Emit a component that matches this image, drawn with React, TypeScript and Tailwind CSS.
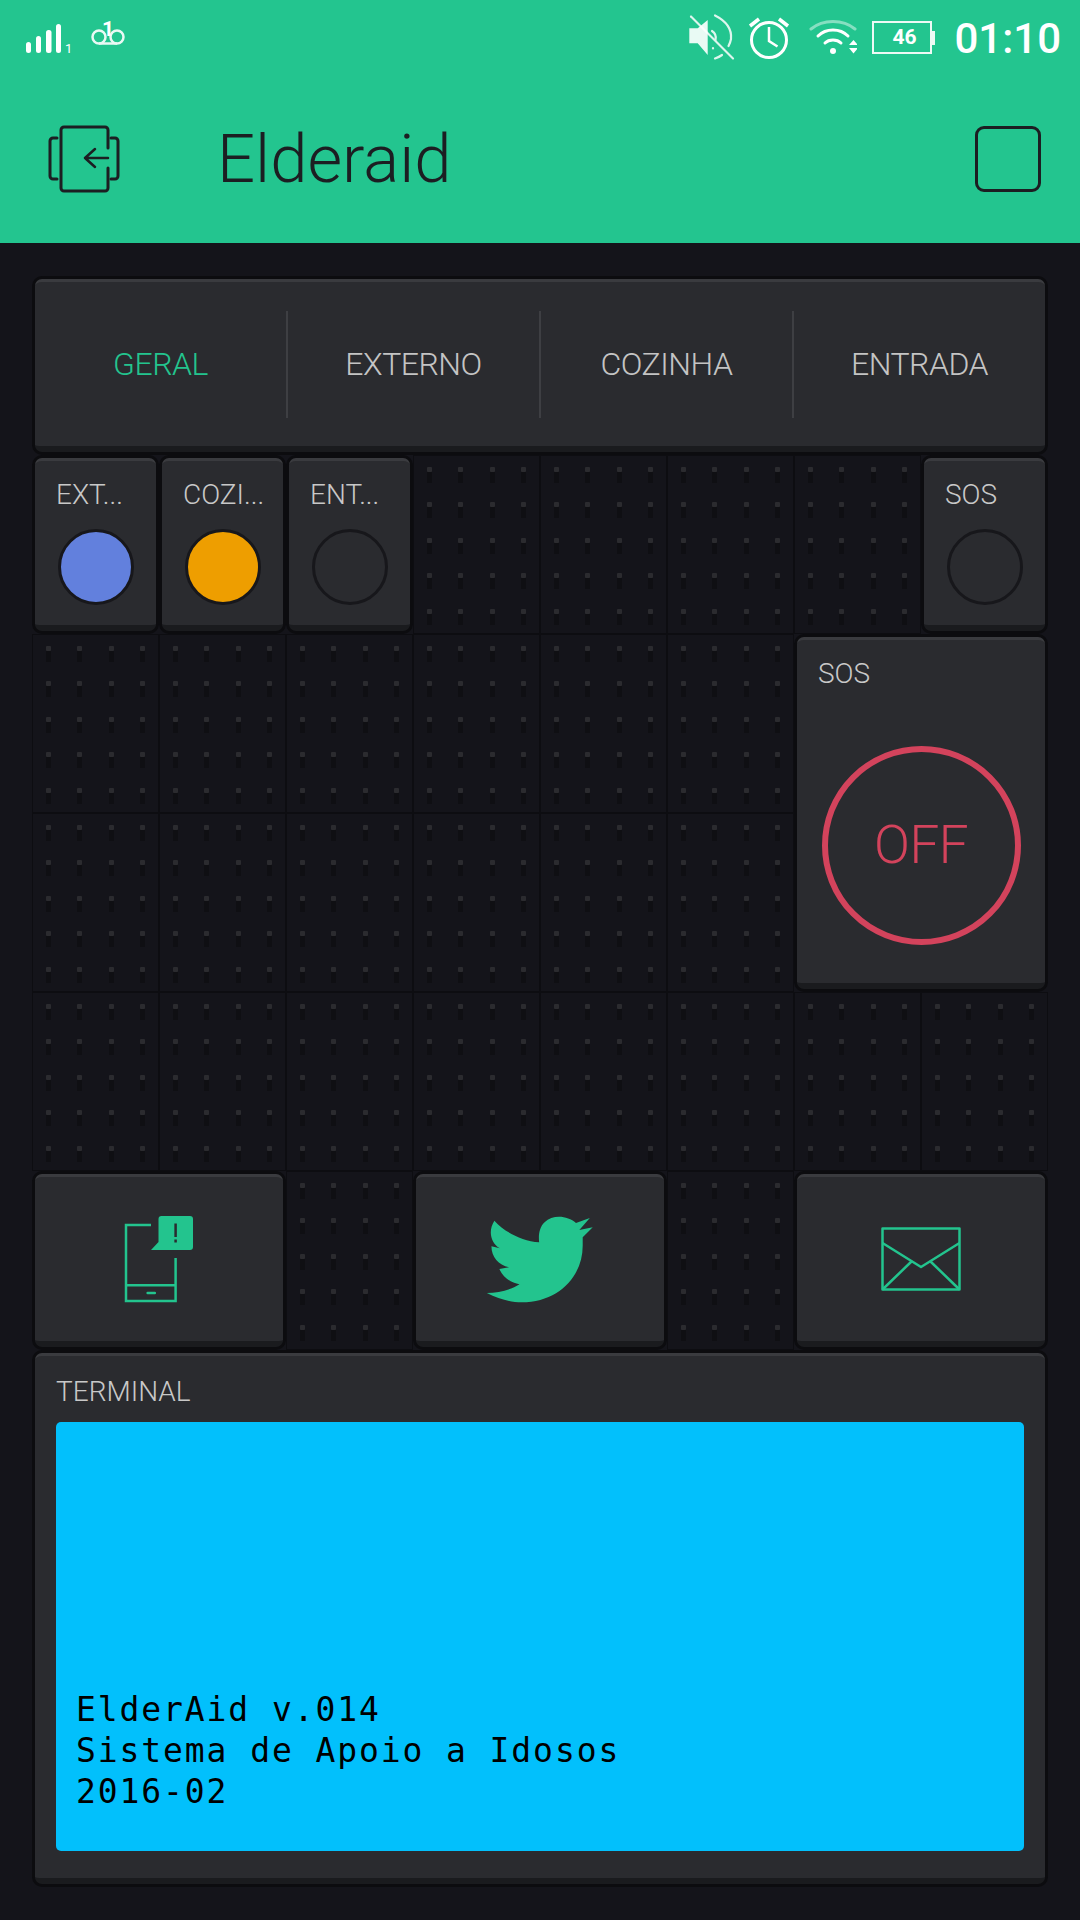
const ui = "[font-family:Roboto,'Liberation_Sans',sans-serif]"

function Dots() {
    const dots = Array.from({ length: 20 })
    return (
        <div className="grid grid-cols-4 grid-rows-5 border border-[#0d0d11] h-full">
            {dots.map((_, i) => (
                <div key={i} className="flex flex-col items-center pt-[11px]">
                    <div className="w-[5px] h-[5px] rounded-[1px] bg-[#2b2b2f]" />
                    <div className="w-[5px] h-[11px] bg-[#0f0f13]" />
                </div>
            ))}
        </div>
    )
}

function Widget({ className = "", children }: { className?: string; children?: React.ReactNode }) {
    return (
        <div className={`m-[3px] rounded-[7px] bg-[#2a2b2f] border-t-[3px] border-t-[#3a3b3f] border-b-[6px] border-b-[#1a1b1e] shadow-[0_0_0_3px_#0c0c0f] ${className}`}>
            {children}
        </div>
    )
}

function Led({ label, color }: { label: string; color?: string }) {
    return (
        <Widget>
            <div className="pl-[21px] pr-1 pt-[17px] text-[28px] leading-[33px] font-light text-[#c8c8c8] whitespace-nowrap">{label}</div>
            <div className="flex justify-center mt-[18px]">
                <div
                    className={`w-[76px] h-[76px] rounded-full border-[3px] border-[#17171b] ${color ?? ""}`}
                />
            </div>
        </Widget>
    )
}

function StatusLeft() {
    return (
        <svg width="110" height="44" viewBox="0 0 110 44" className="ml-[24px] mt-[14px]" fill="none">
            <g fill="#fff">
                <rect x="2" y="28" width="5" height="11" rx="2.5" />
                <rect x="12" y="22" width="5" height="17" rx="2.5" />
                <rect x="22" y="16" width="5.5" height="23" rx="2.5" />
                <rect x="32" y="10" width="5" height="29" rx="2.5" />
                <text x="41" y="39" fontSize="13" fontFamily="Roboto">1</text>
            </g>
            <g stroke="#fff" strokeWidth="2.5" opacity="0.9">
                <circle cx="75" cy="23" r="6.5" />
                <circle cx="93" cy="23" r="6.5" />
                <path d="M75 29.5h18" />
            </g>
            <text x="84" y="22" textAnchor="middle" fontSize="21" fontWeight="700" fontFamily="Roboto" fill="#fff">1</text>
        </svg>
    )
}

function MutedIcon() {
    return (
        <svg width="50" height="50" viewBox="0 0 50 50" fill="none" className="mt-[12px]">
            <path d="M3.3 16.3h8.4L21.7 8v35L11.7 31.3H3.3z" fill="#fff" opacity="0.9" />
            <g stroke="#fff" strokeWidth="2.2" opacity="0.85" strokeLinecap="round">
                <path d="M5 4.5L47 46.5" />
                <path d="M29 3.5C40 9 46 17 45 27c-.5 3-1.500 5-2.500 7" />
                <path d="M36 43c-2 1.500-4 2.500-7 3.500" />
                <path d="M26 19c3 2 4.500 5 3.500 9" />
                <path d="M27 36v.5" />
            </g>
        </svg>
    )
}

function AlarmIcon() {
    return (
        <svg width="44" height="46" viewBox="0 0 44 46" fill="none" stroke="#fff" className="mt-[15px] ml-[12px]">
            <circle cx="21" cy="25" r="17.500" strokeWidth="3" />
            <path d="M21 12v14l8.500 5.500" strokeWidth="2.500" />
            <path d="M2 11L11 4M31 4l9 7" strokeWidth="3.500" />
        </svg>
    )
}

function WifiIcon() {
    return (
        <svg width="48" height="38" viewBox="0 0 48 38" fill="none" stroke="#fff" strokeLinecap="round" className="mt-[18px] ml-[17px]">
            <path d="M2 11C14 1 34 1 46 11" strokeWidth="3" opacity="0.45" />
            <path d="M9 18C17 10 31 10 39 18" strokeWidth="3" />
            <path d="M16 25C20 21 28 21 32 25" strokeWidth="3" />
            <circle cx="24" cy="33" r="3" fill="#fff" stroke="none" />
            <path d="M40 27l4.500-5 4.500 5zM40 30h9l-4.500 5.500z" fill="#fff" stroke="none" />
        </svg>
    )
}

function BatteryIcon() {
    return (
        <div className="ml-[15px] mt-[21px] flex items-center h-[33px]">
            <div className="w-[60px] h-[33px] border-[2.5px] border-[#eefaf5] flex items-center justify-center text-[21px] leading-none font-bold text-white pl-1">
                46
            </div>
            <div className="w-[3px] h-[14px] bg-[#eefaf5]" />
        </div>
    )
}

function SwitchIcon() {
    return (
        <svg width="72" height="68" viewBox="0 0 72 68" fill="none" stroke="#1c1e22" strokeWidth="3" strokeLinecap="round" strokeLinejoin="round">
            <path d="M60 23V5a3 3 0 0 0-3-3H16a3 3 0 0 0-3 3v58a3 3 0 0 0 3 3h41a3 3 0 0 0 3-3V43" />
            <path d="M60 33H37M47 24l-10 9 10 9" strokeWidth="2.500" />
            <path d="M9 13H5a3 3 0 0 0-3 3v35a3 3 0 0 0 3 3h4" />
            <path d="M63 13h4a3 3 0 0 1 3 3v35a3 3 0 0 1-3 3h-4" />
        </svg>
    )
}

function PhoneAlert() {
    return (
        <svg width="72" height="88" viewBox="0 0 72 88" fill="none">
            <path d="M28 10H3v76h49.600V43M3 70.300h49.600" stroke="#23c48e" strokeWidth="2.500" />
            <path d="M24.600 78h7.200" stroke="#23c48e" strokeWidth="2.500" strokeLinecap="round" />
            <path d="M38 1h29a3 3 0 0 1 3 3v28a3 3 0 0 1-3 3H28l7.500-8V4a3 3 0 0 1 3-3z" fill="#23c48e" />
            <path d="M52.600 8.500V22M52.600 24.500v3" stroke="#2a2b2f" strokeWidth="2.500" />
        </svg>
    )
}

function Bird() {
    return (
        <svg width="108" height="88" viewBox="1105 168 258 264" preserveAspectRatio="none">
            <path
                fill="#23c48e"
                d="M1336 235L1360 205L1328 213L1353 177L1320 192C1300 170 1265 165 1245 190C1232 205 1230 230 1232 250C1190 245 1150 220 1125 185C1110 215 1115 250 1138 268L1118 262C1118 295 1135 318 1160 325L1137 330C1145 355 1165 372 1185 376C1165 392 1135 402 1107 402C1135 420 1165 430 1190 430C1280 430 1336 350 1336 260Z"
            />
        </svg>
    )
}

function Mail() {
    return (
        <svg width="80" height="64" viewBox="0 0 80 64" fill="none" stroke="#23c48e" strokeWidth="2.500" strokeLinejoin="round">
            <rect x="1.500" y="1.500" width="77" height="61" />
            <path d="M1.500 16L40 40L78.500 16" />
            <path d="M31 34L1.500 62.500M49 34L78.500 62.500" />
        </svg>
    )
}

export default function App() {
    const tabs = ["GERAL", "EXTERNO", "COZINHA", "ENTRADA"]
    const lines = ["ElderAid v.014", "Sistema de Apoio a Idosos", "2016-02"]

    return (
        <div className={`w-[1080px] h-[1920px] bg-[#14141a] overflow-hidden ${ui}`}>
            <div className="h-[243px] bg-[#23c58f]">
                <div className="flex justify-between h-[72px]">
                    <StatusLeft />
                    <div className="flex pr-[19px]">
                        <MutedIcon />
                        <AlarmIcon />
                        <WifiIcon />
                        <BatteryIcon />
                        <span className="ml-[19px] mt-[16px] text-[42px] leading-[46px] font-medium text-white">01:10</span>
                    </div>
                </div>
                <div className="flex items-center mt-[53px] pl-[48px] pr-[39px] h-[68px]">
                    <SwitchIcon />
                    <span className="ml-[97px] text-[67px] leading-none font-light text-[#1c1e22]">Elderaid</span>
                    <div className="ml-auto w-[66px] h-[66px] rounded-[9px] border-[3px] border-[#1c1e22]" />
                </div>
            </div>

            <div className="mt-[33px] ml-[32px] w-[1016px] grid grid-cols-8 auto-rows-[179px]">
                <Widget className="col-span-8 flex items-center">
                    {tabs.map((t, i) => (
                        <div
                            key={t}
                            className={`flex-1 h-[107px] flex items-center justify-center text-[32px] font-light tracking-[-0.5px] ${i === 0 ? "text-[#23c48e]" : "text-[#c4c4c4]"} ${i < 3 ? "border-r-[2px] border-r-[#3e3f43]" : ""}`}
                        >
                            {t}
                        </div>
                    ))}
                </Widget>

                <Led label="EXT..." color="bg-[#6280dd]" />
                <Led label="COZI..." color="bg-[#ee9e00]" />
                <Led label="ENT..." />
                <Dots />
                <Dots />
                <Dots />
                <Dots />
                <Led label="SOS" />

                {Array.from({ length: 6 }).map((_, i) => <Dots key={`a${i}`} />)}
                <Widget className="col-span-2 row-span-2">
                    <div className="pl-[21px] pt-[17px] text-[28px] leading-[33px] font-light text-[#c8c8c8]">SOS</div>
                    <div className="flex justify-center mt-[56px]">
                        <div className="w-[199px] h-[199px] rounded-full border-[6px] border-[#d3435c] flex items-center justify-center text-[53px] font-light tracking-[-0.5px] text-[#d3435c]">
                            OFF
                        </div>
                    </div>
                </Widget>
                {Array.from({ length: 6 }).map((_, i) => <Dots key={`b${i}`} />)}

                {Array.from({ length: 8 }).map((_, i) => <Dots key={`c${i}`} />)}

                <Widget className="col-span-2 flex items-center justify-center">
                    <PhoneAlert />
                </Widget>
                <Dots />
                <Widget className="col-span-2 flex items-center justify-center">
                    <Bird />
                </Widget>
                <Dots />
                <Widget className="col-span-2 flex items-center justify-center">
                    <Mail />
                </Widget>

                <Widget className="col-span-8 row-span-3 px-[21px] flex flex-col">
                    <div className="pt-[19px] h-[66px] text-[28px] leading-[33px] font-light text-[#c8c8c8]">TERMINAL</div>
                    <div className="w-[968px] h-[429px] rounded-[5px] bg-[#02c0fc] flex flex-col justify-end pl-[20px] pb-[39px] font-['DejaVu_Sans_Mono',monospace] text-[33px] leading-[41px] tracking-[1.9px] text-black">
                        {lines.map(l => <div key={l}>{l}</div>)}
                    </div>
                </Widget>
            </div>
        </div>
    )
}
